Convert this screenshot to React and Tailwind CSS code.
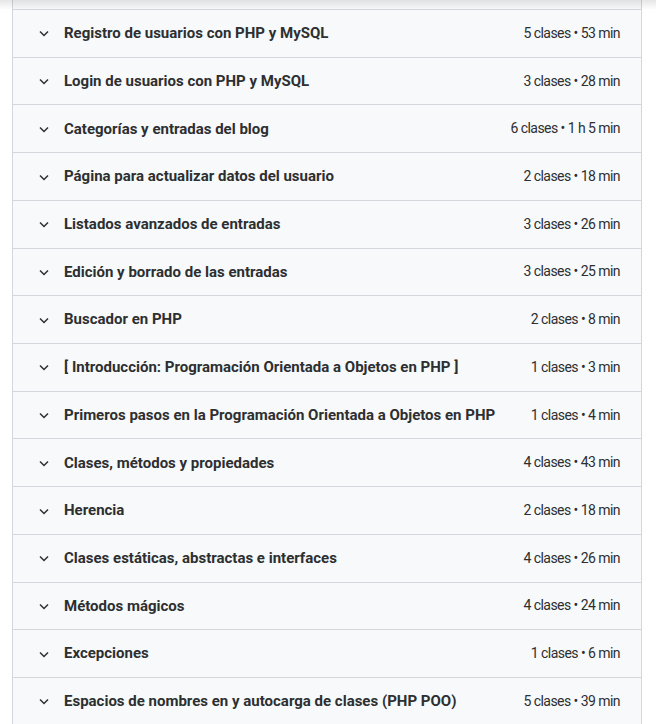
import React from 'react';

const sections = [
  { title: 'Registro de usuarios con PHP y MySQL', meta: '5 clases • 53 min' },
  { title: 'Login de usuarios con PHP y MySQL', meta: '3 clases • 28 min' },
  { title: 'Categorías y entradas del blog', meta: '6 clases • 1 h 5 min' },
  { title: 'Página para actualizar datos del usuario', meta: '2 clases • 18 min' },
  { title: 'Listados avanzados de entradas', meta: '3 clases • 26 min' },
  { title: 'Edición y borrado de las entradas', meta: '3 clases • 25 min' },
  { title: 'Buscador en PHP', meta: '2 clases • 8 min' },
  { title: '[ Introducción: Programación Orientada a Objetos en PHP ]', meta: '1 clases • 3 min' },
  { title: 'Primeros pasos en la Programación Orientada a Objetos en PHP', meta: '1 clases • 4 min' },
  { title: 'Clases, métodos y propiedades', meta: '4 clases • 43 min' },
  { title: 'Herencia', meta: '2 clases • 18 min' },
  { title: 'Clases estáticas, abstractas e interfaces', meta: '4 clases • 26 min' },
  { title: 'Métodos mágicos', meta: '4 clases • 24 min' },
  { title: 'Excepciones', meta: '1 clases • 6 min' },
  { title: 'Espacios de nombres en y autocarga de clases (PHP POO)', meta: '5 clases • 39 min' },
];

const Chevron = () => (
  <svg width="12" height="12" viewBox="0 0 12 12" fill="none" className="shrink-0">
    <polyline points="2,4.5 6,8.5 10,4.5" stroke="#2d2f31" strokeWidth="1.5" />
  </svg>
);

export default function App() {
  return (
    <div className="relative h-[724px] overflow-hidden bg-white font-['Roboto',sans-serif] text-[#2d2f31]">
      <div className="ml-[12px] w-[630px]">
        <div className="h-[9px] border-x border-[#d1d7dc] bg-[#f7f9fa]" />
        {sections.map((s) => (
          <div
            key={s.title}
            className="flex h-[47.72px] items-center border-x border-t border-[#d1d7dc] bg-[#f7f9fa] pl-[25px] pr-[21px]"
          >
            <Chevron />
            <span className="ml-[14px] flex-1 text-[15px] font-bold">{s.title}</span>
            <span className="text-[14px] tracking-[-0.55px]">{s.meta}</span>
          </div>
        ))}
      </div>
      <div className="pointer-events-none absolute inset-x-0 top-0 h-[10px] bg-gradient-to-b from-black/10 to-transparent" />
    </div>
  );
}
